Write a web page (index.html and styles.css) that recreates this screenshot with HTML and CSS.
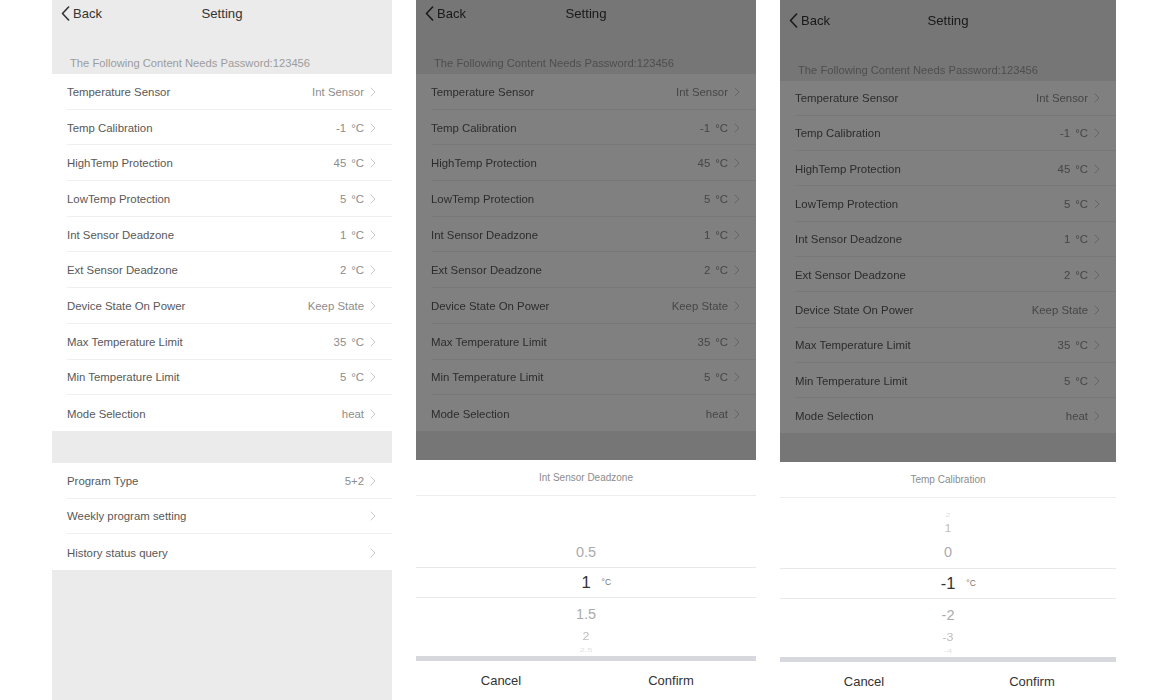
FILE: index.html
```html
<!DOCTYPE html>
<html lang="en">
<head>
<meta charset="utf-8">
<title>Setting</title>
<link rel="stylesheet" href="styles.css">
</head>
<body>
<div class="stage">

  <!-- Screen 1 -->
  <section class="phone">
    <div class="screen">
      <nav class="nav">
        <span class="back"><svg class="back-icon" viewBox="0 0 9 15" width="9" height="15"><path d="M7.6 1 L1.5 7.5 L7.6 14" /></svg>Back</span>
        <span class="nav-title">Setting</span>
        <span></span>
      </nav>
      <div class="section-head">The Following Content Needs Password:123456</div>
      <ul class="group">
        <li class="row"><span class="label">Temperature Sensor</span><span class="value">Int Sensor</span><svg class="chev" viewBox="0 0 6 10" width="6" height="10"><path d="M1 1 L5 5 L1 9"/></svg></li>
        <li class="row"><span class="label">Temp Calibration</span><span class="value">-1<span class="unit">°C</span></span><svg class="chev" viewBox="0 0 6 10" width="6" height="10"><path d="M1 1 L5 5 L1 9"/></svg></li>
        <li class="row"><span class="label">HighTemp Protection</span><span class="value">45<span class="unit">°C</span></span><svg class="chev" viewBox="0 0 6 10" width="6" height="10"><path d="M1 1 L5 5 L1 9"/></svg></li>
        <li class="row"><span class="label">LowTemp Protection</span><span class="value">5<span class="unit">°C</span></span><svg class="chev" viewBox="0 0 6 10" width="6" height="10"><path d="M1 1 L5 5 L1 9"/></svg></li>
        <li class="row"><span class="label">Int Sensor Deadzone</span><span class="value">1<span class="unit">°C</span></span><svg class="chev" viewBox="0 0 6 10" width="6" height="10"><path d="M1 1 L5 5 L1 9"/></svg></li>
        <li class="row"><span class="label">Ext Sensor Deadzone</span><span class="value">2<span class="unit">°C</span></span><svg class="chev" viewBox="0 0 6 10" width="6" height="10"><path d="M1 1 L5 5 L1 9"/></svg></li>
        <li class="row"><span class="label">Device State On Power</span><span class="value">Keep State</span><svg class="chev" viewBox="0 0 6 10" width="6" height="10"><path d="M1 1 L5 5 L1 9"/></svg></li>
        <li class="row"><span class="label">Max Temperature Limit</span><span class="value">35<span class="unit">°C</span></span><svg class="chev" viewBox="0 0 6 10" width="6" height="10"><path d="M1 1 L5 5 L1 9"/></svg></li>
        <li class="row"><span class="label">Min Temperature Limit</span><span class="value">5<span class="unit">°C</span></span><svg class="chev" viewBox="0 0 6 10" width="6" height="10"><path d="M1 1 L5 5 L1 9"/></svg></li>
        <li class="row"><span class="label">Mode Selection</span><span class="value">heat</span><svg class="chev" viewBox="0 0 6 10" width="6" height="10"><path d="M1 1 L5 5 L1 9"/></svg></li>
      </ul>
      <div class="group-gap"></div>
      <ul class="group">
        <li class="row"><span class="label">Program Type</span><span class="value">5+2</span><svg class="chev" viewBox="0 0 6 10" width="6" height="10"><path d="M1 1 L5 5 L1 9"/></svg></li>
        <li class="row"><span class="label">Weekly program setting</span><span class="value"></span><svg class="chev" viewBox="0 0 6 10" width="6" height="10"><path d="M1 1 L5 5 L1 9"/></svg></li>
        <li class="row"><span class="label">History status query</span><span class="value"></span><svg class="chev" viewBox="0 0 6 10" width="6" height="10"><path d="M1 1 L5 5 L1 9"/></svg></li>
      </ul>
    </div>
  </section>

  <!-- Screen 2 -->
  <section class="phone">
    <div class="screen with-sheet">
      <div class="dimmed">
        <nav class="nav">
          <span class="back"><svg class="back-icon" viewBox="0 0 9 15" width="9" height="15"><path d="M7.6 1 L1.5 7.5 L7.6 14" /></svg>Back</span>
          <span class="nav-title">Setting</span>
          <span></span>
        </nav>
        <div class="section-head">The Following Content Needs Password:123456</div>
        <ul class="group">
          <li class="row"><span class="label">Temperature Sensor</span><span class="value">Int Sensor</span><svg class="chev" viewBox="0 0 6 10" width="6" height="10"><path d="M1 1 L5 5 L1 9"/></svg></li>
          <li class="row"><span class="label">Temp Calibration</span><span class="value">-1<span class="unit">°C</span></span><svg class="chev" viewBox="0 0 6 10" width="6" height="10"><path d="M1 1 L5 5 L1 9"/></svg></li>
          <li class="row"><span class="label">HighTemp Protection</span><span class="value">45<span class="unit">°C</span></span><svg class="chev" viewBox="0 0 6 10" width="6" height="10"><path d="M1 1 L5 5 L1 9"/></svg></li>
          <li class="row"><span class="label">LowTemp Protection</span><span class="value">5<span class="unit">°C</span></span><svg class="chev" viewBox="0 0 6 10" width="6" height="10"><path d="M1 1 L5 5 L1 9"/></svg></li>
          <li class="row"><span class="label">Int Sensor Deadzone</span><span class="value">1<span class="unit">°C</span></span><svg class="chev" viewBox="0 0 6 10" width="6" height="10"><path d="M1 1 L5 5 L1 9"/></svg></li>
          <li class="row"><span class="label">Ext Sensor Deadzone</span><span class="value">2<span class="unit">°C</span></span><svg class="chev" viewBox="0 0 6 10" width="6" height="10"><path d="M1 1 L5 5 L1 9"/></svg></li>
          <li class="row"><span class="label">Device State On Power</span><span class="value">Keep State</span><svg class="chev" viewBox="0 0 6 10" width="6" height="10"><path d="M1 1 L5 5 L1 9"/></svg></li>
          <li class="row"><span class="label">Max Temperature Limit</span><span class="value">35<span class="unit">°C</span></span><svg class="chev" viewBox="0 0 6 10" width="6" height="10"><path d="M1 1 L5 5 L1 9"/></svg></li>
          <li class="row"><span class="label">Min Temperature Limit</span><span class="value">5<span class="unit">°C</span></span><svg class="chev" viewBox="0 0 6 10" width="6" height="10"><path d="M1 1 L5 5 L1 9"/></svg></li>
          <li class="row"><span class="label">Mode Selection</span><span class="value">heat</span><svg class="chev" viewBox="0 0 6 10" width="6" height="10"><path d="M1 1 L5 5 L1 9"/></svg></li>
        </ul>
      </div>
      <div class="sheet">
        <div class="sheet-title">Int Sensor Deadzone</div>
        <div class="wheel wheel-a">
          <div class="w-item w-near">0.5</div>
          <div class="w-item w-sel"><span></span><span class="w-num">1</span><span class="w-unit">°C</span></div>
          <div class="w-item w-near">1.5</div>
          <div class="w-item w-far">2</div>
          <div class="w-item w-faint">2.5</div>
        </div>
        <div class="sheet-bar"></div>
        <div class="sheet-actions"><span class="act">Cancel</span><span class="act">Confirm</span></div>
      </div>
    </div>
  </section>

  <!-- Screen 3 -->
  <section class="phone phone-narrow">
    <div class="screen with-sheet">
      <div class="dimmed">
        <nav class="nav">
          <span class="back"><svg class="back-icon" viewBox="0 0 9 15" width="9" height="15"><path d="M7.6 1 L1.5 7.5 L7.6 14" /></svg>Back</span>
          <span class="nav-title">Setting</span>
          <span></span>
        </nav>
        <div class="section-head">The Following Content Needs Password:123456</div>
        <ul class="group">
          <li class="row"><span class="label">Temperature Sensor</span><span class="value">Int Sensor</span><svg class="chev" viewBox="0 0 6 10" width="6" height="10"><path d="M1 1 L5 5 L1 9"/></svg></li>
          <li class="row"><span class="label">Temp Calibration</span><span class="value">-1<span class="unit">°C</span></span><svg class="chev" viewBox="0 0 6 10" width="6" height="10"><path d="M1 1 L5 5 L1 9"/></svg></li>
          <li class="row"><span class="label">HighTemp Protection</span><span class="value">45<span class="unit">°C</span></span><svg class="chev" viewBox="0 0 6 10" width="6" height="10"><path d="M1 1 L5 5 L1 9"/></svg></li>
          <li class="row"><span class="label">LowTemp Protection</span><span class="value">5<span class="unit">°C</span></span><svg class="chev" viewBox="0 0 6 10" width="6" height="10"><path d="M1 1 L5 5 L1 9"/></svg></li>
          <li class="row"><span class="label">Int Sensor Deadzone</span><span class="value">1<span class="unit">°C</span></span><svg class="chev" viewBox="0 0 6 10" width="6" height="10"><path d="M1 1 L5 5 L1 9"/></svg></li>
          <li class="row"><span class="label">Ext Sensor Deadzone</span><span class="value">2<span class="unit">°C</span></span><svg class="chev" viewBox="0 0 6 10" width="6" height="10"><path d="M1 1 L5 5 L1 9"/></svg></li>
          <li class="row"><span class="label">Device State On Power</span><span class="value">Keep State</span><svg class="chev" viewBox="0 0 6 10" width="6" height="10"><path d="M1 1 L5 5 L1 9"/></svg></li>
          <li class="row"><span class="label">Max Temperature Limit</span><span class="value">35<span class="unit">°C</span></span><svg class="chev" viewBox="0 0 6 10" width="6" height="10"><path d="M1 1 L5 5 L1 9"/></svg></li>
          <li class="row"><span class="label">Min Temperature Limit</span><span class="value">5<span class="unit">°C</span></span><svg class="chev" viewBox="0 0 6 10" width="6" height="10"><path d="M1 1 L5 5 L1 9"/></svg></li>
          <li class="row"><span class="label">Mode Selection</span><span class="value">heat</span><svg class="chev" viewBox="0 0 6 10" width="6" height="10"><path d="M1 1 L5 5 L1 9"/></svg></li>
        </ul>
      </div>
      <div class="sheet">
        <div class="sheet-title">Temp Calibration</div>
        <div class="wheel wheel-b">
          <div class="w-item w-faint">2</div>
          <div class="w-item w-far">1</div>
          <div class="w-item w-near">0</div>
          <div class="w-item w-sel"><span></span><span class="w-num">-1</span><span class="w-unit">°C</span></div>
          <div class="w-item w-near">-2</div>
          <div class="w-item w-far">-3</div>
          <div class="w-item w-faint">-4</div>
        </div>
        <div class="sheet-bar"></div>
        <div class="sheet-actions"><span class="act">Cancel</span><span class="act">Confirm</span></div>
      </div>
    </div>
  </section>

</div>
</body>
</html>
```

FILE: styles.css
```css
* { box-sizing: border-box; }

html, body {
  margin: 0;
  padding: 0;
  background: #ffffff;
}

body {
  font-family: "Liberation Sans", Arial, Helvetica, sans-serif;
  color: #333;
}

.stage {
  display: flex;
  gap: 24px;
  padding-left: 52px;
  height: 700px;
}

.phone {
  width: 340px;
  height: 700px;
  background: #ebebeb;
  overflow: hidden;
}

.phone-narrow {
  width: 336px;
}

.screen {
  height: 100%;
  display: flex;
  flex-direction: column;
}

/* nav bar */
.nav {
  height: 26px;
  display: grid;
  grid-template-columns: 1fr auto 1fr;
  align-items: center;
  font-size: 13px;
  color: #333;
}

.phone-narrow .nav {
  height: 33px;
  padding-top: 7px;
}

.back {
  display: flex;
  align-items: center;
  padding-left: 9px;
  color: #333;
}

.back-icon {
  margin-right: 3px;
  fill: none;
  stroke: #333;
  stroke-width: 1.6;
  stroke-linecap: round;
  stroke-linejoin: round;
}

.nav-title {
  font-size: 13.2px;
  color: #333;
}

/* section header */
.section-head {
  height: 48px;
  display: flex;
  align-items: flex-end;
  padding: 0 0 5px 18px;
  font-size: 11.2px;
  color: #9c9c9c;
}

.phone-narrow .section-head {
  height: 47.5px;
  padding-bottom: 5px;
}

/* grouped list */
.group {
  list-style: none;
  margin: 0;
  padding: 0;
  background: #fff;
}

.row {
  height: 35.7px;
  margin-left: 15px;
  padding-right: 16px;
  padding-top: 1px;
  display: flex;
  align-items: center;
  border-bottom: 1px solid #efefef;
  font-size: 11.4px;
}

.phone-narrow .row {
  height: 35.3px;
}

.row:last-child {
  border-bottom: none;
}

.label {
  flex: 1;
  color: #585858;
}

.value {
  color: #8c8c8c;
  margin-right: 6px;
}

.unit {
  margin-left: 5px;
}

.chev {
  fill: none;
  stroke: #c8c8c8;
  stroke-width: 1;
  stroke-linecap: round;
  stroke-linejoin: round;
}

.group-gap {
  height: 32px;
}

/* dimmed screen with sheet */
.dimmed {
  flex: 1;
  background: #ebebeb;
  filter: brightness(0.5);
  overflow: hidden;
}

.sheet {
  height: 240px;
  background: #fff;
  display: flex;
  flex-direction: column;
}

.phone-narrow .sheet {
  height: 238px;
}

.sheet-title {
  height: 36px;
  display: flex;
  align-items: center;
  justify-content: center;
  font-size: 10px;
  color: #8c8c8c;
  border-bottom: 1px solid #eeeeee;
}

.wheel {
  display: flex;
  flex-direction: column;
}

.wheel-a {
  height: 160px;
  padding-top: 40px;
}

.wheel-b {
  height: 159px;
  padding-top: 12px;
}

.w-item {
  display: flex;
  align-items: center;
  justify-content: center;
  height: 31px;
  font-size: 14.5px;
  color: #ababab;
}

.w-near {
  height: 31px;
}

.w-far {
  height: 16px;
  font-size: 12.5px;
  color: #bdbdbd;
  transform: scaleY(0.8);
}

.w-faint {
  height: 11px;
  font-size: 9.5px;
  color: #e0e0e0;
  transform: scaleY(0.5);
}

.w-sel {
  display: grid;
  grid-template-columns: 1fr auto 1fr;
  height: 31px;
  border-top: 1px solid #e8e8e8;
  border-bottom: 1px solid #e8e8e8;
  color: #333;
  font-size: 16.5px;
}

.wheel-b .w-sel {
  height: 32px;
}

.w-unit {
  font-size: 8.5px;
  color: #777;
  padding-left: 11px;
  align-self: center;
  margin-top: -2px;
}

.sheet-bar {
  height: 5px;
  background: #d7d7de;
}

.sheet-actions {
  flex: 1;
  display: flex;
}

.act {
  flex: 1;
  display: flex;
  align-items: center;
  justify-content: center;
  font-size: 13px;
  color: #333;
}
```
